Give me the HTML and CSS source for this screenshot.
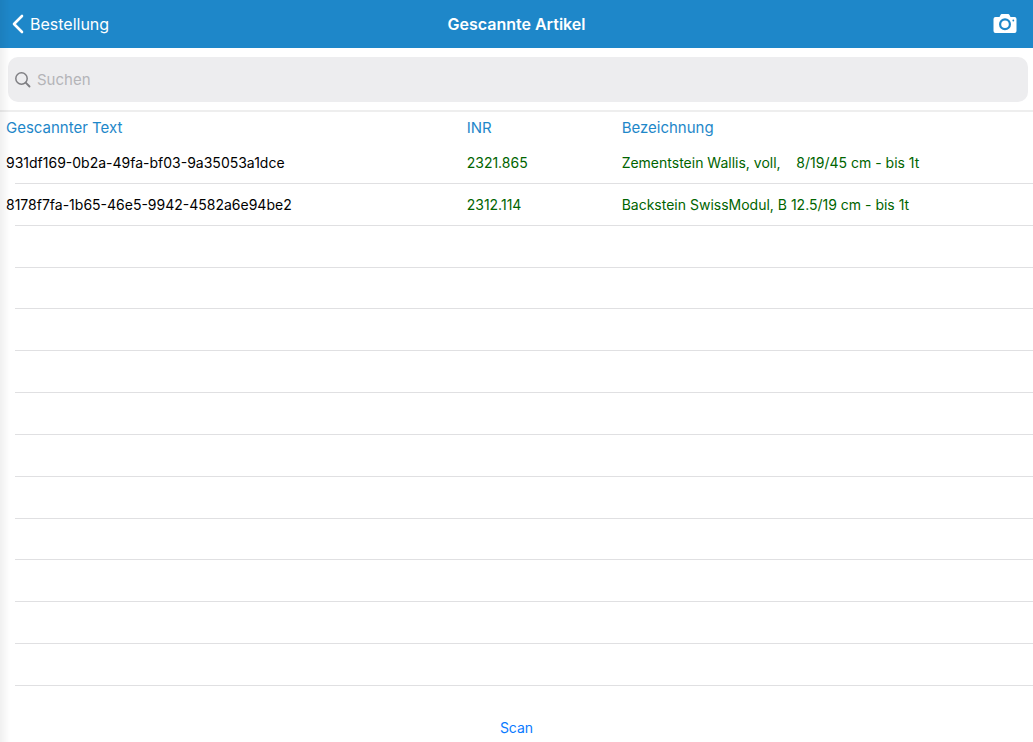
FILE: index.html
```html
<!DOCTYPE html>
<html lang="de">
<head>
  <meta charset="utf-8">
  <meta name="viewport" content="width=device-width, initial-scale=1">
  <title>Gescannte Artikel</title>
  <link rel="stylesheet" href="styles.css">
</head>
<body>
  <header class="navbar">
    <a class="back" href="#">
      <svg width="12" height="20" viewBox="0 0 12 20" fill="none" stroke="#fff" stroke-width="2.6" stroke-linecap="round" stroke-linejoin="round">
        <path d="M10 2 2 10l8 8"/>
      </svg>
      Bestellung
    </a>
    <h1>Gescannte Artikel</h1>
    <button class="camera" type="button" aria-label="Kamera">
      <svg width="24" height="20" viewBox="0 0 24 20">
        <path fill="#fff" d="M2.500 3h4l1-2q.4-1 1.300-1h6.400q.9 0 1.300 1l1 2h4q2 0 2 2v12q0 2-2 2h-19q-2 0-2-2V5q0-2 2-2z"/>
        <circle cx="12" cy="10.300" r="4.900" fill="none" stroke="#1e87c9" stroke-width="2.200"/>
        <circle cx="20.300" cy="6.500" r="0.900" fill="#1e87c9"/>
      </svg>
    </button>
  </header>

  <form class="search">
    <label class="search-box">
      <svg width="16" height="16" viewBox="0 0 16 16" fill="none" stroke="#7f7f83" stroke-width="1.500" stroke-linecap="round">
        <circle cx="6.500" cy="6.500" r="5.700"/>
        <path d="m10.700 10.700 3.800 3.800" stroke-width="1.900"/>
      </svg>
      <input type="search" placeholder="Suchen" aria-label="Suchen">
    </label>
  </form>

  <main class="list">
    <table>
      <thead>
        <tr>
          <th class="col-text">Gescannter Text</th>
          <th class="col-inr">INR</th>
          <th>Bezeichnung</th>
        </tr>
      </thead>
      <tbody>
        <tr>
          <td>931df169-0b2a-49fa-bf03-9a35053a1dce</td>
          <td class="found">2321.865</td>
          <td class="found">Zementstein Wallis, voll,    8/19/45 cm - bis 1t</td>
        </tr>
        <tr>
          <td>8178f7fa-1b65-46e5-9942-4582a6e94be2</td>
          <td class="found">2312.114</td>
          <td class="found">Backstein SwissModul, B 12.5/19 cm - bis 1t</td>
        </tr>
        <tr><td colspan="3"></td></tr>
        <tr><td colspan="3"></td></tr>
        <tr><td colspan="3"></td></tr>
        <tr><td colspan="3"></td></tr>
        <tr><td colspan="3"></td></tr>
        <tr><td colspan="3"></td></tr>
        <tr><td colspan="3"></td></tr>
        <tr><td colspan="3"></td></tr>
        <tr><td colspan="3"></td></tr>
        <tr><td colspan="3"></td></tr>
        <tr><td colspan="3"></td></tr>
      </tbody>
    </table>
  </main>

  <footer class="toolbar">
    <button class="scan" type="button">Scan</button>
  </footer>
</body>
</html>
```

FILE: styles.css
```css
* {
  box-sizing: border-box;
}

body {
  margin: 0;
  min-height: 100vh;
  display: flex;
  flex-direction: column;
  font-family: Inter, "Liberation Sans", sans-serif;
  font-size: 14px;
  background-color: #fff;
}

/* soft shadow along the left edge */
body::before {
  content: "";
  position: fixed;
  top: 0;
  bottom: 0;
  left: 0;
  width: 10px;
  background: linear-gradient(to right, rgba(0, 0, 0, 0.06), rgba(0, 0, 0, 0));
  pointer-events: none;
}

button {
  padding: 0;
  border: none;
  background: none;
  font: inherit;
  cursor: pointer;
}

svg {
  display: block;
}

.navbar {
  display: grid;
  grid-template-columns: 1fr auto 1fr;
  align-items: center;
  height: 48px;
  padding: 0 12px;
  background-color: #1e87c9;
  color: #fff;
}

.navbar h1 {
  margin: 0;
  font-size: 16px;
  font-weight: 600;
}

.back {
  display: flex;
  align-items: center;
  gap: 6px;
  color: #fff;
  font-size: 16px;
  text-decoration: none;
}

.camera {
  justify-self: end;
  padding-right: 4px;
}

.search {
  padding: 9px 5px 8px 8px;
  border-bottom: 2px solid #eee;
}

.search-box {
  display: flex;
  align-items: center;
  gap: 6px;
  height: 45px;
  padding: 0 7px;
  border-radius: 10px;
  background-color: #ededef;
}

.search-box input {
  flex: 1;
  padding: 0;
  border: none;
  outline: none;
  background: none;
  font: inherit;
  font-size: 15px;
}

.search-box input::placeholder {
  color: #b4b4b8;
}

.list {
  flex: 1;
  display: grid;
}

table {
  width: 100%;
  height: 100%;
  table-layout: fixed;
  border-collapse: collapse;
}

th, td {
  padding: 0 0 0 6px;
  text-align: left;
  white-space: pre;
}

th {
  height: 30px;
  color: #1e87c9;
  font-size: 15px;
  font-weight: 400;
}

td {
  height: 41px;
}

.col-text {
  width: 44.6%;
}

.col-inr {
  width: 15%;
}

/* separators start a little in from the left */
tbody tr {
  background: linear-gradient(#e0e0e2, #e0e0e2) 15px bottom / 100% 1px no-repeat;
}

.found {
  color: #006400;
}

.toolbar {
  display: flex;
  justify-content: center;
  align-items: flex-end;
  height: 56px;
  padding-bottom: 6px;
}

.scan {
  color: #0a7aff;
}
```
